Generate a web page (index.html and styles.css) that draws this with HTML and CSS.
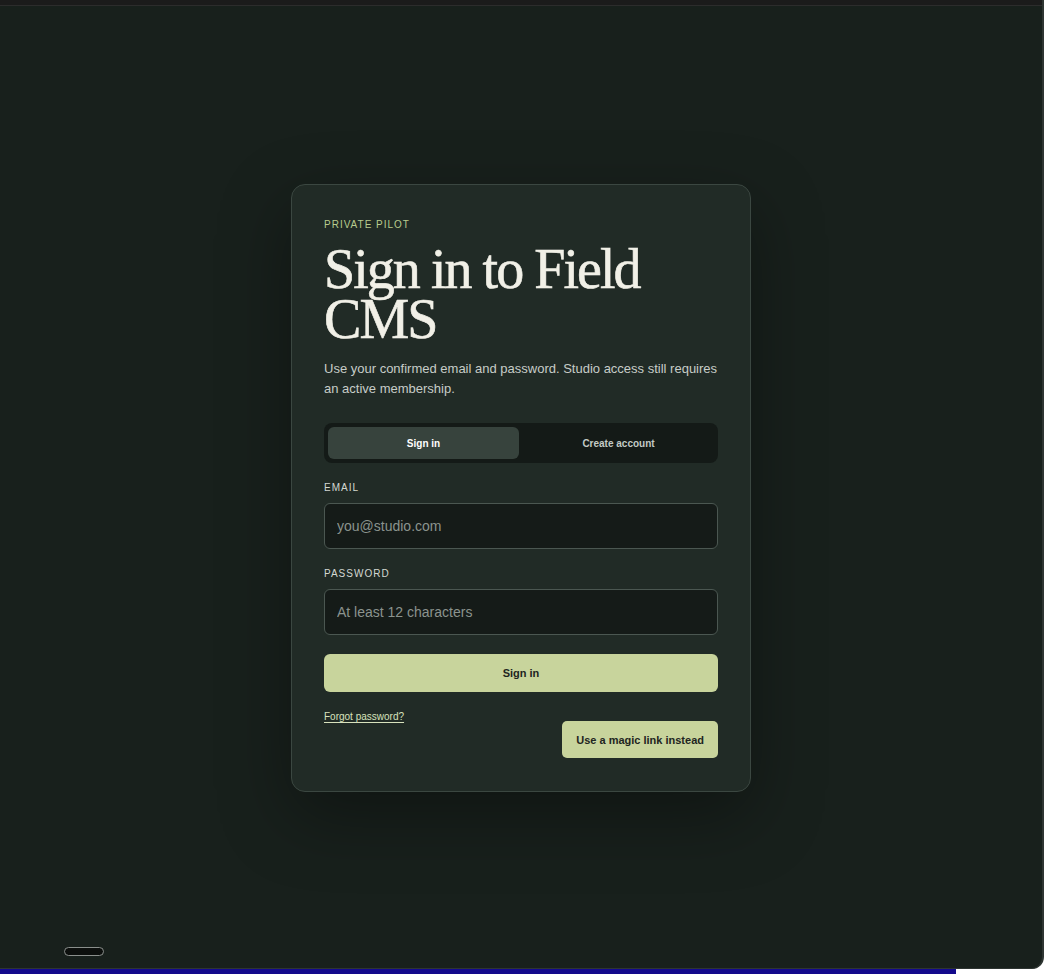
FILE: index.html
```html
<!DOCTYPE html>
<html lang="en">
<head>
<meta charset="utf-8">
<title>Sign in to Field CMS</title>
<link rel="stylesheet" href="styles.css">
</head>
<body>
<div class="frame">
  <div class="topbar"></div>
  <main class="stage">
    <section class="card">
      <p class="eyebrow">PRIVATE PILOT</p>
      <h1 class="title">Sign in to Field CMS</h1>
      <p class="lede">Use your confirmed email and password. Studio access still requires an active membership.</p>
      <div class="tabs">
        <button class="tab tab-active" type="button">Sign in</button>
        <button class="tab" type="button">Create account</button>
      </div>
      <form class="form">
        <label class="field">
          <span class="label">EMAIL</span>
          <input class="input" type="email" placeholder="you@studio.com">
        </label>
        <label class="field">
          <span class="label">PASSWORD</span>
          <input class="input" type="password" placeholder="At least 12 characters">
        </label>
        <button class="primary" type="button">Sign in</button>
        <div class="footer">
          <a class="forgot" href="#">Forgot password?</a>
          <button class="magic" type="button">Use a magic link instead</button>
        </div>
      </form>
    </section>
  </main>
  <div class="pill"></div>
</div>
<div class="bottomstrip"><div class="bluebar"></div></div>
</body>
</html>
```
FILE: styles.css
```css
* { box-sizing: border-box; }
html, body { margin: 0; padding: 0; }
body {
  background: #ffffff;
  font-family: "Liberation Sans", Arial, sans-serif;
  width: 1044px;
  height: 974px;
  overflow: hidden;
}
.frame {
  position: relative;
  width: 1044px;
  height: 969px;
  background: #18201c;
  border-right: 2px solid #2e3532;
  border-bottom: 1px solid #2e3532;
  border-bottom-right-radius: 12px;
  display: flex;
  flex-direction: column;
  overflow: hidden;
}
.topbar {
  height: 6px;
  background: #1b1b1b;
  border-bottom: 1px solid #2c2c2c;
  flex: none;
}
.stage {
  flex: 1;
  display: flex;
  align-items: center;
  justify-content: center;
}
.card {
  width: 460px;
  margin-top: 2px;
  background: #212b26;
  border: 1px solid #3b4741;
  border-radius: 14px;
  padding: 33px 32px 33px;
  box-shadow: 0 24px 70px rgba(0, 0, 0, 0.35);
}
.eyebrow {
  margin: 0;
  font-size: 10px;
  line-height: 14px;
  letter-spacing: 0.1em;
  color: #b8cc8e;
}
.title {
  margin: 12px 0 0;
  font-family: "Liberation Serif", "Times New Roman", serif;
  font-weight: 400;
  font-size: 56px;
  line-height: 50px;
  letter-spacing: -0.035em;
  color: #f1f0e7;
  -webkit-text-stroke: 0.6px #f1f0e7;
}
.lede {
  margin: 15px 0 0;
  font-size: 13px;
  line-height: 20px;
  color: #c7cdc8;
}
.tabs {
  margin-top: 24px;
  display: grid;
  grid-template-columns: 1fr 1fr;
  gap: 4px;
  padding: 4px;
  height: 40px;
  background: #141a17;
  border-radius: 8px;
}
.tab {
  border: 0;
  background: transparent;
  border-radius: 6px;
  font-family: "Liberation Sans", Arial, sans-serif;
  font-size: 10px;
  font-weight: 700;
  color: #c3cac5;
  cursor: pointer;
}
.tab-active {
  background: #37433d;
  color: #ffffff;
}
.form {
  margin-top: 18px;
  display: flex;
  flex-direction: column;
  gap: 18px;
}
.field {
  display: flex;
  flex-direction: column;
  gap: 8px;
}
.label {
  font-size: 10px;
  line-height: 14px;
  letter-spacing: 0.1em;
  color: #d3d8d2;
}
.input {
  height: 46px;
  width: 100%;
  background: #151b18;
  border: 1px solid #4b5751;
  border-radius: 6px;
  padding: 0 12px;
  font-family: "Liberation Sans", Arial, sans-serif;
  font-size: 14px;
  color: #e5e8e4;
  outline: none;
}
.input::placeholder { color: #8b938e; }
.primary {
  margin-top: 1px;
  height: 38px;
  border: 0;
  border-radius: 6px;
  background: #c8d49c;
  color: #1e2521;
  font-family: "Liberation Sans", Arial, sans-serif;
  font-size: 11px;
  font-weight: 700;
  cursor: pointer;
}
.footer {
  display: flex;
  justify-content: space-between;
  align-items: flex-start;
}
.forgot {
  font-size: 10px;
  line-height: 12px;
  color: #d8e2bd;
  text-decoration: underline;
  text-underline-offset: 2px;
  margin-top: 1px;
}
.magic {
  margin-top: 11px;
  height: 37px;
  padding: 0 14px;
  border: 0;
  border-radius: 5px;
  background: #c8d49c;
  color: #1e2521;
  font-family: "Liberation Sans", Arial, sans-serif;
  font-size: 11px;
  font-weight: 700;
  cursor: pointer;
}
.pill {
  position: absolute;
  left: 64px;
  top: 947px;
  width: 40px;
  height: 9px;
  border: 1px solid #8a8f8c;
  border-radius: 6px;
  background: #0c0f0d;
}
.bottomstrip {
  height: 5px;
  background: #ffffff;
}
.bluebar {
  width: 956px;
  height: 5px;
  background: #13098c;
}
```
